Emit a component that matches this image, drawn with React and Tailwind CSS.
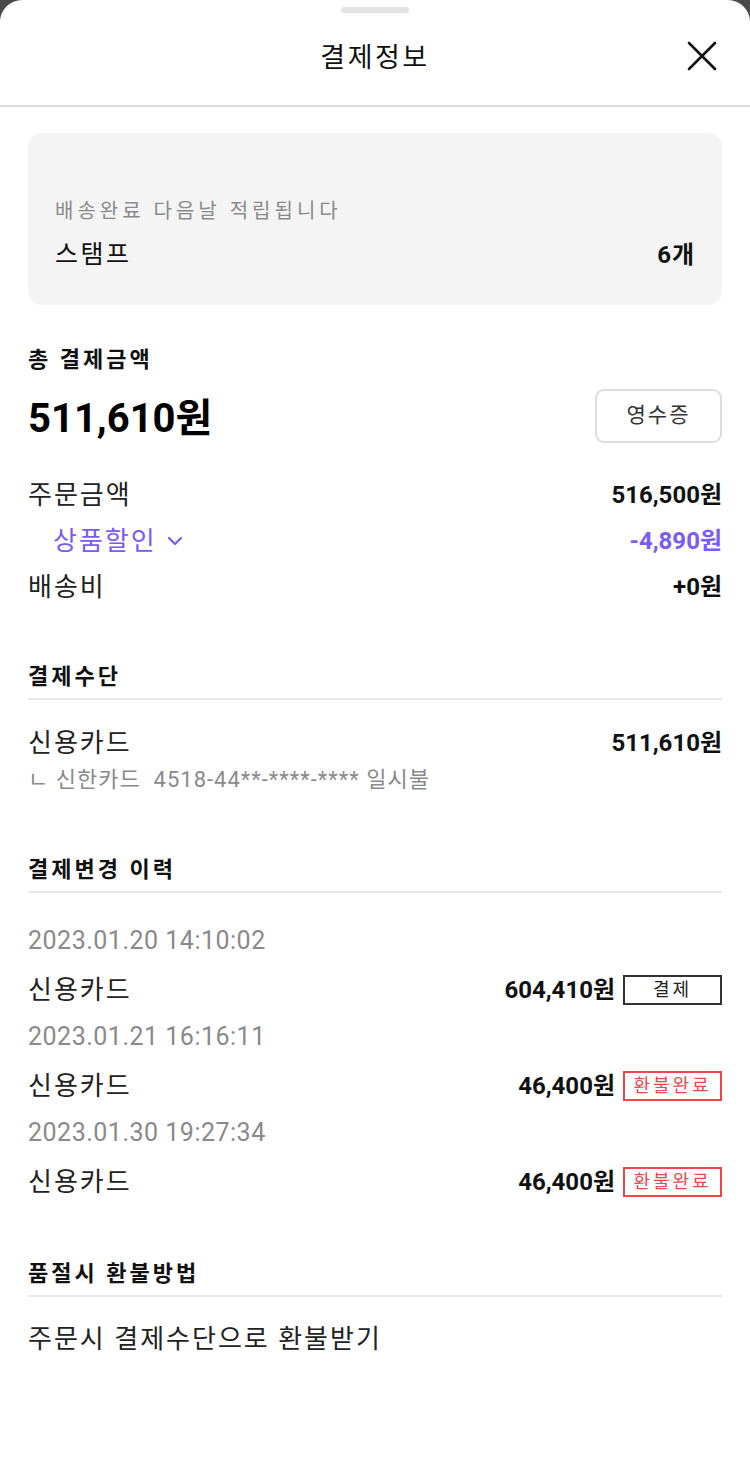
const font = { fontFamily: 'Roboto, "Noto Sans CJK KR", sans-serif' }

const Badge = ({ red, children }) => (
  <span
    className={
      "ml-2 inline-flex h-[30px] w-[99px] items-center justify-center border-2 text-[18px] leading-none tracking-[3px] " +
      (red ? "border-[#f0454a] text-[#f0454a]" : "border-[#333] text-[#222]")
    }
  >
    {children}
  </span>
)

const SectionTitle = ({ children }) => (
  <div className="border-b-2 border-[#e8e8e8] pb-[8px] text-[22px] font-bold leading-[26px] tracking-[3px] text-[#111]">
    {children}
  </div>
)

const history = [
  { date: "2023.01.20 14:10:02", amount: "604,410원", badge: "결제", red: false },
  { date: "2023.01.21 16:16:11", amount: "46,400원", badge: "환불완료", red: true },
  { date: "2023.01.30 19:27:34", amount: "46,400원", badge: "환불완료", red: true },
]

export default function App() {
  return (
    <div className="h-[1459px] w-[750px] bg-[#4a4a4a]" style={font}>
      <div className="h-full rounded-t-[22px] bg-white">
        {/* header */}
        <div className="relative border-b-2 border-[#dcdcdc]">
          <div className="flex justify-center pt-[7px]">
            <div className="h-[6px] w-[68px] rounded-full bg-[#e3e3e3]" />
          </div>
          <div className="flex h-[92px] items-center justify-center pb-[2px] text-[27px] tracking-[2.5px] text-[#111]">결제정보</div>
          <button className="absolute right-[32px] top-[40px] p-0">
            <svg width="32" height="32" viewBox="0 0 32 32" fill="none" stroke="#111" strokeWidth="2.6" strokeLinecap="round">
              <path d="M3 3L29 29M29 3L3 29" />
            </svg>
          </button>
        </div>

        <div className="px-[28px]">
          {/* stamp card */}
          <div className="mt-[26px] flex h-[172px] flex-col justify-end rounded-[14px] bg-[#f4f4f4] px-[27px] pb-[35px]">
            <div className="text-[20px] leading-[26px] tracking-[4px] text-[#8a8a8a]">배송완료 다음날 적립됩니다</div>
            <div className="mt-[16px] flex items-center justify-between">
              <span className="text-[25px] leading-[30px] tracking-[2.5px] text-[#111]">스탬프</span>
              <span className="text-[24px] font-bold leading-[30px] tracking-[1px] text-[#111]">6개</span>
            </div>
          </div>

          {/* total */}
          <div className="mt-[41px] text-[22px] font-bold leading-[28px] tracking-[3px] text-[#111]">총 결제금액</div>
          <div className="mt-[14px] flex items-center justify-between">
            <span className="pt-[6px] text-[40px] font-bold leading-[50px] text-black">511,610원</span>
            <button className="h-[54px] w-[127px] rounded-[9px] border-2 border-[#dddddd] bg-white text-[21px] tracking-[2px] text-[#333]">
              영수증
            </button>
          </div>

          <div className="mt-[34px] flex flex-col gap-[12px] text-[24px] leading-[34px]">
            <div className="flex items-center justify-between">
              <span className="text-[26px] tracking-[2px] text-[#222]">주문금액</span>
              <span className="font-bold text-[#111]">516,500원</span>
            </div>
            <div className="flex items-center justify-between">
              <span className="flex items-center pl-[25px] text-[26px] tracking-[2px] text-[#7a5af8]">
                상품할인
                <svg className="ml-[10px]" width="16" height="10" viewBox="0 0 16 10" fill="none" stroke="#7a5af8" strokeWidth="2.2" strokeLinecap="round" strokeLinejoin="round">
                  <path d="M2 2l6 6 6-6" />
                </svg>
              </span>
              <span className="font-bold text-[#7a5af8]">-4,890원</span>
            </div>
            <div className="flex items-center justify-between">
              <span className="text-[26px] tracking-[2px] text-[#222]">배송비</span>
              <span className="font-bold text-[#111]">+0원</span>
            </div>
          </div>

          {/* payment method */}
          <div className="mt-[60px]">
            <SectionTitle>결제수단</SectionTitle>
            <div className="mt-[26px] flex items-center justify-between leading-[34px]">
              <span className="text-[26px] tracking-[2px] text-[#222]">신용카드</span>
              <span className="text-[24px] font-bold text-[#111]">511,610원</span>
            </div>
            <div className="mt-[5px] text-[22px] leading-[30px] tracking-[1px] text-[#8a8a8a]">
              ㄴ 신한카드&nbsp; 4518-44**-****-**** 일시불
            </div>
          </div>

          {/* history */}
          <div className="mt-[62px]">
            <SectionTitle>결제변경 이력</SectionTitle>
            <div className="mt-[32px] flex flex-col">
              {history.map((h, i) => (
                <div key={i} className={i > 0 ? "mt-[14px]" : ""}>
                  <div className="text-[25px] leading-[32px] tracking-[0.5px] text-[#8a8a8a]">{h.date}</div>
                  <div className="mt-[16px] flex items-center justify-between leading-[34px]">
                    <span className="text-[26px] tracking-[2px] text-[#222]">신용카드</span>
                    <span className="flex items-center">
                      <span className="text-[24px] font-bold text-[#111]">{h.amount}</span>
                      <Badge red={h.red}>{h.badge}</Badge>
                    </span>
                  </div>
                </div>
              ))}
            </div>
          </div>

          {/* refund */}
          <div className="mt-[62px]">
            <SectionTitle>품절시 환불방법</SectionTitle>
            <div className="mt-[25px] text-[26px] leading-[34px] tracking-[2px] text-[#222]">주문시 결제수단으로 환불받기</div>
          </div>
        </div>
      </div>
    </div>
  )
}
